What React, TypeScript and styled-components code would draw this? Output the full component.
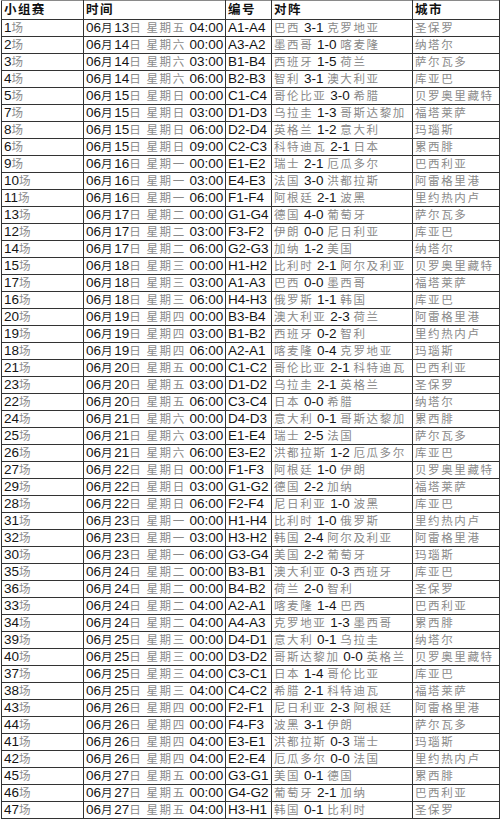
import styled, { createGlobalStyle } from "styled-components";

const GlobalStyle = createGlobalStyle`
    html, body {
        margin: 0;
        padding: 0;
        background: #ffffff;
    }
`;

type Match = [string, string, string, string, string, string, string];

// 场次, 日期, 星期, 时间, 编号, 对阵, 城市
const matches: Match[] = [
    ["1", "13", "五", "04:00", "A1-A4", "巴西 3-1 克罗地亚", "圣保罗"],
    ["2", "14", "六", "00:00", "A3-A2", "墨西哥 1-0 喀麦隆", "纳塔尔"],
    ["3", "14", "六", "03:00", "B1-B4", "西班牙 1-5 荷兰", "萨尔瓦多"],
    ["4", "14", "六", "06:00", "B2-B3", "智利 3-1 澳大利亚", "库亚巴"],
    ["5", "15", "日", "00:00", "C1-C4", "哥伦比亚 3-0 希腊", "贝罗奥里藏特"],
    ["7", "15", "日", "03:00", "D1-D3", "乌拉圭 1-3 哥斯达黎加", "福塔莱萨"],
    ["8", "15", "日", "06:00", "D2-D4", "英格兰 1-2 意大利", "玛瑙斯"],
    ["6", "15", "日", "09:00", "C2-C3", "科特迪瓦 2-1 日本", "累西腓"],
    ["9", "16", "一", "00:00", "E1-E2", "瑞士 2-1 厄瓜多尔", "巴西利亚"],
    ["10", "16", "一", "03:00", "E4-E3", "法国 3-0 洪都拉斯", "阿雷格里港"],
    ["11", "16", "一", "06:00", "F1-F4", "阿根廷 2-1 波黑", "里约热内卢"],
    ["13", "17", "二", "00:00", "G1-G4", "德国 4-0 葡萄牙", "萨尔瓦多"],
    ["12", "17", "二", "03:00", "F3-F2", "伊朗 0-0 尼日利亚", "库亚巴"],
    ["14", "17", "二", "06:00", "G2-G3", "加纳 1-2 美国", "纳塔尔"],
    ["15", "18", "三", "00:00", "H1-H2", "比利时 2-1 阿尔及利亚", "贝罗奥里藏特"],
    ["17", "18", "三", "03:00", "A1-A3", "巴西 0-0 墨西哥", "福塔莱萨"],
    ["16", "18", "三", "06:00", "H4-H3", "俄罗斯 1-1 韩国", "库亚巴"],
    ["20", "19", "四", "00:00", "B3-B4", "澳大利亚 2-3 荷兰", "阿雷格里港"],
    ["19", "19", "四", "03:00", "B1-B2", "西班牙 0-2 智利", "里约热内卢"],
    ["18", "19", "四", "06:00", "A2-A1", "喀麦隆 0-4 克罗地亚", "玛瑙斯"],
    ["21", "20", "五", "00:00", "C1-C2", "哥伦比亚 2-1 科特迪瓦", "巴西利亚"],
    ["23", "20", "五", "03:00", "D1-D2", "乌拉圭 2-1 英格兰", "圣保罗"],
    ["22", "20", "五", "06:00", "C3-C4", "日本 0-0 希腊", "纳塔尔"],
    ["24", "21", "六", "00:00", "D4-D3", "意大利 0-1 哥斯达黎加", "累西腓"],
    ["25", "21", "六", "03:00", "E1-E4", "瑞士 2-5 法国", "萨尔瓦多"],
    ["26", "21", "六", "06:00", "E3-E2", "洪都拉斯 1-2 厄瓜多尔", "库亚巴"],
    ["27", "22", "日", "00:00", "F1-F3", "阿根廷 1-0 伊朗", "贝罗奥里藏特"],
    ["29", "22", "日", "03:00", "G1-G2", "德国 2-2 加纳", "福塔莱萨"],
    ["28", "22", "日", "06:00", "F2-F4", "尼日利亚 1-0 波黑", "库亚巴"],
    ["31", "23", "一", "00:00", "H1-H4", "比利时 1-0 俄罗斯", "里约热内卢"],
    ["32", "23", "一", "03:00", "H3-H2", "韩国 2-4 阿尔及利亚", "阿雷格里港"],
    ["30", "23", "一", "06:00", "G3-G4", "美国 2-2 葡萄牙", "玛瑙斯"],
    ["35", "24", "二", "00:00", "B3-B1", "澳大利亚 0-3 西班牙", "库亚巴"],
    ["36", "24", "二", "00:00", "B4-B2", "荷兰 2-0 智利", "圣保罗"],
    ["33", "24", "二", "04:00", "A2-A1", "喀麦隆 1-4 巴西", "巴西利亚"],
    ["34", "24", "二", "04:00", "A4-A3", "克罗地亚 1-3 墨西哥", "累西腓"],
    ["39", "25", "三", "00:00", "D4-D1", "意大利 0-1 乌拉圭", "纳塔尔"],
    ["40", "25", "三", "00:00", "D3-D2", "哥斯达黎加 0-0 英格兰", "贝罗奥里藏特"],
    ["37", "25", "三", "04:00", "C3-C1", "日本 1-4 哥伦比亚", "库亚巴"],
    ["38", "25", "三", "04:00", "C4-C2", "希腊 2-1 科特迪瓦", "福塔莱萨"],
    ["43", "26", "四", "00:00", "F2-F1", "尼日利亚 2-3 阿根廷", "阿雷格里港"],
    ["44", "26", "四", "00:00", "F4-F3", "波黑 3-1 伊朗", "萨尔瓦多"],
    ["41", "26", "四", "04:00", "E3-E1", "洪都拉斯 0-3 瑞士", "玛瑙斯"],
    ["42", "26", "四", "04:00", "E2-E4", "厄瓜多尔 0-0 法国", "里约热内卢"],
    ["45", "27", "五", "00:00", "G3-G1", "美国 0-1 德国", "累西腓"],
    ["46", "27", "五", "00:00", "G4-G2", "葡萄牙 2-1 加纳", "巴西利亚"],
    ["47", "27", "五", "04:00", "H3-H1", "韩国 0-1 比利时", "圣保罗"],
];

const Sheet = styled.table`
    margin-left: 1px;
    width: 498px;
    border-collapse: collapse;
    table-layout: fixed;
    font-family: "Liberation Sans", "Noto Sans CJK SC", sans-serif;
    font-size: 13.5px;
    color: #141414;
`;

const HeadRow = styled.tr`
    height: 19px;
`;

const BodyRow = styled.tr`
    height: 17px;
`;

const Cell = styled.td`
    border: 1px solid #333333;
    padding: 0 0 0 2px;
    line-height: 16px;
    white-space: nowrap;
    overflow: hidden;
    vertical-align: middle;
    font-size: 13.5px;
    color: #141414;
`;

const HeadCell = styled(Cell)`
    border-color: #8a8a8a #333333 #333333 #333333;
`;

const HeadText = styled.span`
    font-family: "Noto Sans CJK SC", sans-serif;
    font-size: 12.5px;
    line-height: 14px;
    font-weight: 700;
    letter-spacing: 1.4px;
    color: #111111;
`;

// smaller CJK glyphs keep each line inside its 17px row; spacing keeps the width
const Han = styled.span<{ $dark?: boolean }>`
    font-family: "Noto Sans CJK SC", sans-serif;
    font-size: 11.5px;
    line-height: 14px;
    letter-spacing: 1.6px;
    color: ${(p) => (p.$dark ? "#2a2a2a" : "#8a8a8a")};
`;

// wrap runs of Chinese characters so they take the lighter grey of the sheet
function Mixed({ text }: { text: string }) {
    const parts = text.split(/([\u4e00-\u9fff]+)/).filter(Boolean);
    return (
        <>
            {parts.map((part, i) =>
                /[\u4e00-\u9fff]/.test(part) ? <Han key={i}>{part}</Han> : <span key={i}>{part}</span>
            )}
        </>
    );
}

const widths = [82, 142, 46, 141, 87];
const headers = ["小组赛", "时间", "编号", "对阵", "城市"];

function App() {
    return (
        <>
            <GlobalStyle />
            <Sheet>
                <colgroup>
                    {widths.map((w, i) => (
                        <col key={i} style={{ width: w }} />
                    ))}
                </colgroup>
                <thead>
                    <HeadRow>
                        {headers.map((h) => (
                            <HeadCell key={h}>
                                <HeadText>{h}</HeadText>
                            </HeadCell>
                        ))}
                    </HeadRow>
                </thead>
                <tbody>
                    {matches.map(([no, day, week, time, code, pair, city]) => (
                        <BodyRow key={no}>
                            <Cell>
                                {no}
                                <Han>场</Han>
                            </Cell>
                            <Cell>
                                06<Han $dark>月</Han>
                                {day}
                                <Han>日 星期{week}</Han> {time}
                            </Cell>
                            <Cell>{code}</Cell>
                            <Cell>
                                <Mixed text={pair} />
                            </Cell>
                            <Cell>
                                <Han>{city}</Han>
                            </Cell>
                        </BodyRow>
                    ))}
                </tbody>
            </Sheet>
        </>
    );
}

export default App;
